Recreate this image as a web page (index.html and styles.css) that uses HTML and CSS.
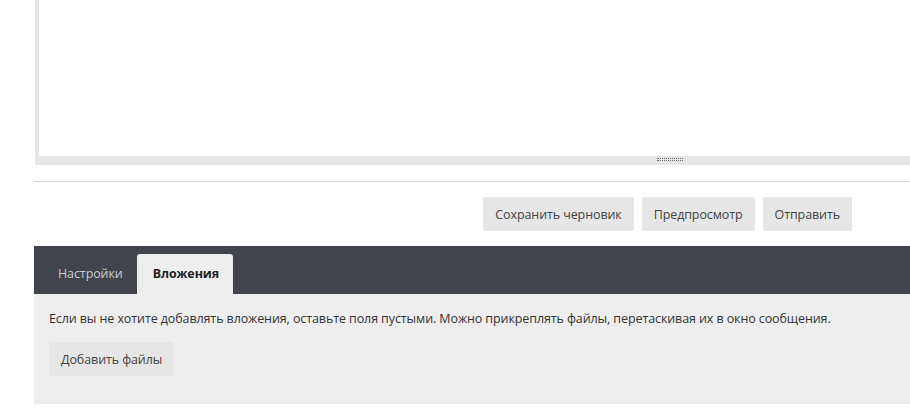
FILE: index.html
```html
<!DOCTYPE html>
<html lang="ru">
<head>
<meta charset="utf-8">
<title>Ответ</title>
<link rel="stylesheet" href="styles.css">
</head>
<body>
<div class="page">
  <div class="editor">
    <div class="editor-area"></div>
    <div class="editor-resize"><span class="grip"></span></div>
  </div>
  <hr class="divider">
  <div class="actions">
    <button class="btn">Сохранить черновик</button>
    <button class="btn">Предпросмотр</button>
    <button class="btn">Отправить</button>
  </div>
  <div class="panel">
    <div class="tabs">
      <span class="tab">Настройки</span>
      <span class="tab tab-active">Вложения</span>
    </div>
    <div class="panel-body">
      <p class="hint">Если вы не хотите добавлять вложения, оставьте поля пустыми. Можно прикреплять файлы, перетаскивая их в окно сообщения.</p>
      <button class="btn">Добавить файлы</button>
    </div>
  </div>
</div>
</body>
</html>
```
FILE: styles.css
```css
html, body {
  margin: 0;
  padding: 0;
  background: #ffffff;
  overflow: hidden;
}
body {
  font-family: "Open Sans", "Noto Sans", "DejaVu Sans", sans-serif;
  font-size: 12.5px;
  letter-spacing: -0.1px;
  color: #333333;
}
.page {
  margin-left: 34px;
  width: 876px;
  overflow: hidden;
}
.editor {
  margin-left: 1px;
  width: 900px;
  border-left: 4px solid #e6e6e6;
  background: #e6e6e6;
}
.editor-area {
  height: 156px;
  background: #ffffff;
}
.editor-resize {
  height: 9px;
  display: flex;
  justify-content: flex-start;
  padding-left: 618px;
  box-sizing: border-box;
}
.grip {
  display: block;
  margin-top: 2px;
  width: 26px;
  height: 1px;
  border-top: 1px dotted #6b6b6b;
  border-bottom: 1px dotted #6b6b6b;
}
.divider {
  margin: 16px 0 0;
  border: 0;
  border-top: 1px solid #d6d6d6;
  height: 0;
}
.actions {
  display: flex;
  justify-content: flex-end;
  gap: 8px;
  padding: 15px 58px 15px 0;
}
.btn {
  font-family: inherit;
  font-size: 12.5px;
  letter-spacing: -0.1px;
  color: #444444;
  background: #e6e6e6;
  border: 0;
  border-radius: 2px;
  height: 34px;
  padding: 0 12px;
  cursor: pointer;
}
.panel {
  background: #eeeeee;
}
.tabs {
  display: flex;
  align-items: flex-end;
  height: 48px;
  box-sizing: border-box;
  padding: 8px 8px 0 8px;
  background: #41444b;
}
.tab {
  height: 40px;
  line-height: 40px;
  padding: 0 14px 0 16px;
  color: #c9cad3;
  border-radius: 3px 3px 0 0;
}
.tab-active {
  background: #eeeeee;
  color: #222222;
  font-weight: 700;
}
.panel-body {
  padding: 15px 15px 28px;
}
.hint {
  margin: 0 0 13px;
  line-height: 20px;
  color: #333333;
}
```
